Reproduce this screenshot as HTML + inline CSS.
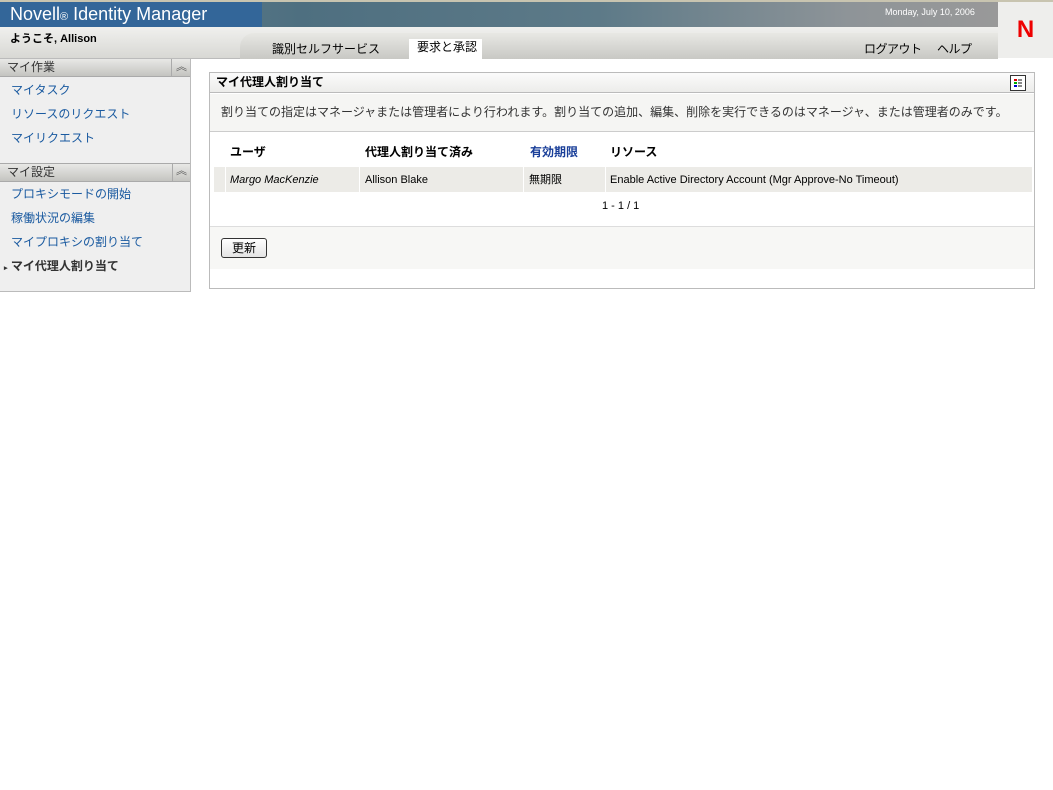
<!DOCTYPE html>
<html><head><meta charset="utf-8"><style>
*{margin:0;padding:0;box-sizing:border-box}
body{width:1053px;height:790px;background:#fff;font-family:"Liberation Sans","Noto Sans CJK JP",sans-serif;font-size:12px;color:#000;position:relative;overflow:hidden;line-height:1.2}
.abs{position:absolute}
a{color:#1a5aa0;text-decoration:none}
</style></head><body>
<div class="abs" style="left:0;top:0;width:998px;height:27px;background:linear-gradient(90deg,#6a8795 0%,#4e6f80 30%,#5d7a88 60%,#8e9498 85%,#999 100%)"></div>
<div class="abs" style="left:0;top:0;width:1053px;height:2px;background:#c8c4b0"></div>
<div class="abs" style="left:0;top:2px;width:262px;height:25px;background:#336699;color:#fff;font-size:18px;line-height:25px;padding-left:10px">Novell<span style="font-size:11px">®</span> Identity Manager</div>
<div class="abs" style="left:885px;top:7px;color:#fff;font-size:9px">Monday, July 10, 2006</div>
<div class="abs" style="left:0;top:27px;width:998px;height:32px;background:linear-gradient(#f0f0ee,#d8d8d4);border-bottom:1px solid #bbb"></div>
<div class="abs" style="left:240px;top:33px;width:758px;height:26px;background:linear-gradient(#e8e8e4,#c8c8c4);border-radius:14px 0 0 0"></div>
<div class="abs" style="left:10px;top:33px;font-size:11px;font-weight:bold">ようこそ, Allison</div>
<div class="abs" style="left:272px;top:42px;font-size:12px">識別セルフサービス</div>
<div class="abs" style="left:409px;top:39px;width:73px;height:20px;background:#fff;padding:1px 0 0 8px;font-size:12px">要求と承認</div>
<div class="abs" style="left:864px;top:42px;font-size:12px;letter-spacing:-0.5px">ログアウト</div>
<div class="abs" style="left:937px;top:42px;font-size:12px;letter-spacing:-0.5px">ヘルプ</div>
<div class="abs" style="left:998px;top:2px;width:55px;height:56px;background:#eeeeec;color:#e00;font-weight:bold;font-size:24px;text-align:center;line-height:56px">N</div>

<div class="abs" style="left:0;top:59px;width:191px;height:233px;background:#efefef;border:1px solid #bbb;border-left:none"></div>
<div class="abs" style="left:0;top:59px;width:190px;height:18px;background:linear-gradient(#e8e8e6,#c4c4c0);border-bottom:1px solid #aaa;font-size:12px;line-height:17px;padding:0 0 0 7px;color:#333">マイ作業</div>
<div class="abs" style="left:171px;top:59px;width:1px;height:18px;background:#aaa"></div>
<div class="abs" style="left:176px;top:61px;font-size:11px;color:#555">︽</div>
<a class="abs" style="left:11px;top:83px">マイタスク</a>
<a class="abs" style="left:11px;top:107px">リソースのリクエスト</a>
<a class="abs" style="left:11px;top:131px">マイリクエスト</a>
<div class="abs" style="left:0;top:163px;width:190px;height:19px;background:linear-gradient(#e8e8e6,#c4c4c0);border-top:1px solid #aaa;border-bottom:1px solid #aaa;font-size:12px;line-height:17px;padding:0 0 0 7px;color:#333">マイ設定</div>
<div class="abs" style="left:172px;top:164px;width:1px;height:18px;background:#aaa"></div>
<div class="abs" style="left:176px;top:165px;font-size:11px;color:#555">︽</div>
<a class="abs" style="left:11px;top:187px">プロキシモードの開始</a>
<a class="abs" style="left:11px;top:211px">稼働状況の編集</a>
<a class="abs" style="left:11px;top:235px">マイプロキシの割り当て</a>
<div class="abs" style="left:4px;top:259px;font-size:12px;font-weight:bold;color:#333"><span style="font-size:7px">▸</span> マイ代理人割り当て</div>

<div class="abs" style="left:209px;top:72px;width:826px;height:217px;border:1px solid #bbb;background:#fff"></div>
<div class="abs" style="left:210px;top:73px;width:824px;height:20px;background:linear-gradient(#fbfbfb,#ececea);border-bottom:1px solid #bbb;font-weight:bold;font-size:12px;line-height:19px;padding:0 0 0 6px">マイ代理人割り当て</div>
<div class="abs" style="left:1010px;top:75px;width:16px;height:16px;border:1px solid #333;background:#fff;font-size:0">
<div style="position:absolute;left:3px;top:3px;width:3px;height:2px;background:#d00"></div><div style="position:absolute;left:7px;top:3px;width:4px;height:2px;background:#888"></div>
<div style="position:absolute;left:3px;top:6px;width:3px;height:2px;background:#0a0"></div><div style="position:absolute;left:7px;top:6px;width:4px;height:2px;background:#888"></div>
<div style="position:absolute;left:3px;top:9px;width:3px;height:2px;background:#00c"></div><div style="position:absolute;left:7px;top:9px;width:4px;height:2px;background:#888"></div></div>
<div class="abs" style="left:210px;top:94px;width:824px;height:38px;background:#f5f5f3;border-bottom:1px solid #ccc;padding:11px 0 0 11px;color:#333;font-size:12px">割り当ての指定はマネージャまたは管理者により行われます。割り当ての追加、編集、削除を実行できるのはマネージャ、または管理者のみです。</div>
<div class="abs" style="left:230px;top:145px;font-weight:bold">ユーザ</div>
<div class="abs" style="left:365px;top:145px;font-weight:bold">代理人割り当て済み</div>
<div class="abs" style="left:530px;top:145px;font-weight:bold;color:#1a3f99">有効期限</div>
<div class="abs" style="left:610px;top:145px;font-weight:bold">リソース</div>
<div class="abs" style="left:214px;top:167px;width:818px;height:25px;background:#ecebe7"></div>
<div class="abs" style="left:225px;top:167px;width:1px;height:25px;background:#fff"></div>
<div class="abs" style="left:359px;top:167px;width:1px;height:25px;background:#fff"></div>
<div class="abs" style="left:523px;top:167px;width:1px;height:25px;background:#fff"></div>
<div class="abs" style="left:605px;top:167px;width:1px;height:25px;background:#fff"></div>
<div class="abs" style="left:230px;top:173px;font-size:11px;font-style:italic;line-height:14px">Margo MacKenzie</div>
<div class="abs" style="left:365px;top:173px;font-size:11px;line-height:14px">Allison Blake</div>
<div class="abs" style="left:529px;top:173px;font-size:11px;line-height:14px">無期限</div>
<div class="abs" style="left:610px;top:173px;font-size:11px;line-height:14px">Enable Active Directory Account (Mgr Approve-No Timeout)</div>
<div class="abs" style="left:602px;top:200px;font-size:11px">1 - 1 / 1</div>
<div class="abs" style="left:210px;top:226px;width:824px;height:43px;background:#f7f7f5;border-top:1px solid #ddd"></div>
<div class="abs" style="left:221px;top:238px;width:46px;height:20px;border:1px solid #333;border-radius:3px;background:linear-gradient(#fff,#e4e4e4);text-align:center;font-size:12px;line-height:18px">更新</div>
</body></html>
